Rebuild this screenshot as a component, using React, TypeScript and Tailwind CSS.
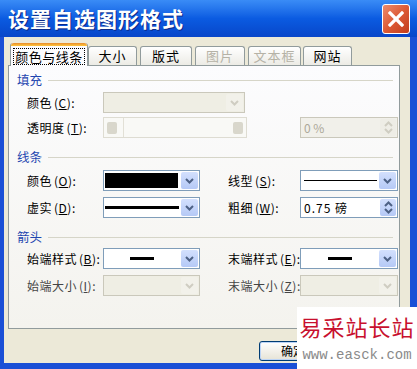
import React from "react";

const CJK = '"Noto Sans CJK SC", "Noto Sans", sans-serif';

function Chevron({ color = "#4d6185", down = true }: { color?: string; down?: boolean }) {
  return (
    <svg width="9" height="6" viewBox="0 0 9 6">
      <path d={down ? "M1 1 L4.5 4.5 L8 1" : "M1 5 L4.5 1.5 L8 5"} fill="none" stroke={color} strokeWidth="2" />
    </svg>
  );
}

function ArrowBtn({ disabled }: { disabled?: boolean }) {
  return (
    <div
      className={`ml-auto m-[1px] flex w-[17px] items-center justify-center rounded-[2px] ${
        disabled ? "bg-[#f2f1ea]" : "bg-gradient-to-b from-[#d3e0fd] to-[#b5c9f6]"
      }`}
    >
      <Chevron color={disabled ? "#cfcdc2" : "#4d6185"} />
    </div>
  );
}

function Combo({ className, disabled, children }: { className: string; disabled?: boolean; children?: React.ReactNode }) {
  return (
    <div
      className={`flex h-[21px] items-stretch border ${
        disabled ? "border-[#cac8bb] bg-[#efeee4]" : "border-[#7f9db9] bg-white"
      } ${className}`}
    >
      <div className="flex flex-1 items-center">{children}</div>
      <ArrowBtn disabled={disabled} />
    </div>
  );
}

function Spinner({ className, disabled, children }: { className: string; disabled?: boolean; children?: React.ReactNode }) {
  return (
    <div
      className={`flex h-[21px] items-stretch border ${
        disabled ? "border-[#cac8bb] bg-[#f1f0ea]" : "border-[#7f9db9] bg-white"
      } ${className}`}
    >
      <div className={`flex flex-1 items-center pl-[3px] text-[12px] ${disabled ? "text-[#aca899]" : "text-black"}`}>
        {children}
      </div>
      <div
        className={`m-[1px] flex w-[16px] flex-col items-center justify-center gap-[1px] rounded-[2px] ${
          disabled ? "bg-[#eeede6]" : "bg-gradient-to-b from-[#d3e0fd] to-[#b5c9f6]"
        }`}
      >
        <Chevron color={disabled ? "#cfcdc2" : "#4d6185"} down={false} />
        <Chevron color={disabled ? "#cfcdc2" : "#4d6185"} />
      </div>
    </div>
  );
}

function Label({ text, k, className = "", disabled }: { text: string; k: string; className?: string; disabled?: boolean }) {
  return (
    <div className={`flex items-center whitespace-nowrap text-[12px] tracking-[0.5px] ${disabled ? "text-[#444]" : "text-black"} ${className}`}>
      {text}
      <span className="ml-[2px]">
        (<span className="underline">{k}</span>):
      </span>
    </div>
  );
}

function Heading({ text, className = "" }: { text: string; className?: string }) {
  return (
    <div className={`flex h-[16px] items-center pl-[8px] pr-[6px] ${className}`}>
      <span className="text-[12.5px] text-[#1f47b0]">{text}</span>
      <div className="ml-[6px] h-[1px] flex-1 bg-[#d6d5c8]" />
    </div>
  );
}

const tabs = [
  { t: "颜色与线条", w: "w-[78px]", ml: "ml-[2px]", sel: true },
  { t: "大小", w: "w-[49px]", ml: "ml-0" },
  { t: "版式", w: "w-[52px]", ml: "ml-[3px]" },
  { t: "图片", w: "w-[50px]", ml: "ml-[3px]", dis: true },
  { t: "文本框", w: "w-[53px]", ml: "ml-[3px]", dis: true },
  { t: "网站", w: "w-[49px]", ml: "ml-[2px]" },
];

export default function App() {
  return (
    <div className="relative flex h-[369px] w-[417px] flex-col overflow-hidden bg-[#1a4fd6]" style={{ fontFamily: CJK }}>
      {/* Title bar */}
      <div className="flex h-[37px] items-center justify-between bg-gradient-to-b from-[#3a8cf6] via-[#0b5be1] to-[#0846c9] pl-[8px] pr-[7px]">
        <span className="text-[21px] font-bold tracking-[1px] text-white [text-shadow:1px_1px_0_#0b2a8a]">设置自选图形格式</span>
        <div className="flex h-[30px] w-[28px] items-center justify-center rounded-[3px] border border-white bg-gradient-to-br from-[#ec8a6c] via-[#dc5a35] to-[#c23c1c]">
          <svg width="16" height="16" viewBox="0 0 16 16">
            <path d="M2 2 L14 14 M14 2 L2 14" stroke="white" strokeWidth="3.2" strokeLinecap="square" />
          </svg>
        </div>
      </div>

      {/* Frame + body */}
      <div className="flex flex-1 pb-[6px] pl-[4px] pr-[7px]">
        <div className="flex flex-1 flex-col bg-[#ece9d8] pl-[4px] pr-[10px] pt-[6px]">
          {/* Tabs */}
          <div className="relative z-10 flex h-[22px] items-end">
            {tabs.map((tb) =>
              tb.sel ? (
                <div
                  key={tb.t}
                  className={`${tb.ml} ${tb.w} -mb-[1px] flex h-[23px] flex-col rounded-t-[3px] border-x border-[#919b9c] bg-[#fcfcfe]`}
                >
                  <div className="h-[3px] rounded-t-[3px] bg-gradient-to-b from-[#e68b2c] to-[#ffc73c]" />
                  <div className="flex flex-1 items-center justify-center">
                    <span className="border border-dotted border-black px-[1px] text-[13px] leading-[15px] tracking-[0.5px] text-black">
                      {tb.t}
                    </span>
                  </div>
                </div>
              ) : (
                <div
                  key={tb.t}
                  className={`${tb.ml} ${tb.w} flex h-[19px] items-center justify-center rounded-t-[3px] border-x border-t border-[#919b9c] bg-gradient-to-b from-white to-[#ecebe5] text-[13px] tracking-[1px] ${
                    tb.dis ? "text-[#b5b2a6]" : "text-black"
                  }`}
                >
                  {tb.t}
                </div>
              )
            )}
          </div>

          {/* Panel */}
          <div className="flex h-[264px] flex-col border border-[#919b9c] bg-gradient-to-b from-[#fcfcfe] to-[#f4f3ee]">
            <Heading text="填充" className="mt-[6px]" />
            {/* row 1 */}
            <div className="mt-[4px] flex h-[21px] items-center pl-[18px]">
              <Label text="颜色" k="C" className="w-[76px]" />
              <Combo className="w-[142px]" disabled />
            </div>
            {/* row 2 */}
            <div className="mt-[4px] flex h-[21px] items-center pl-[18px]">
              <Label text="透明度" k="T" className="w-[76px]" />
              <div className="relative flex h-[21px] w-[144px] items-center border border-[#dedcd2] bg-[#f9f9f6]">
                <div className="ml-[3px] h-[12px] w-[10px] rounded-[2px] bg-[#d9d7cc]" />
                <div className="ml-[6px] h-[19px] w-[1px] bg-[#e2e0d6]" />
                <div className="ml-auto mr-[3px] h-[12px] w-[10px] rounded-[2px] bg-[#d9d7cc]" />
              </div>
              <Spinner className="ml-[53px] w-[98px]" disabled>
                0 %
              </Spinner>
            </div>

            <Heading text="线条" className="mt-[11px]" />
            {/* row 3 */}
            <div className="mt-[5px] flex h-[21px] items-center pl-[18px]">
              <Label text="颜色" k="O" className="w-[76px]" />
              <Combo className="w-[97px]">
                <div className="ml-[1px] h-[15px] w-[73px] bg-black" />
              </Combo>
              <Label text="线型" k="S" className="ml-[28px] w-[72px]" />
              <Combo className="w-[98px]">
                <div className="ml-[3px] h-[1px] w-[73px] bg-black" />
              </Combo>
            </div>
            {/* row 4 */}
            <div className="mt-[6px] flex h-[21px] items-center pl-[18px]">
              <Label text="虚实" k="D" className="w-[76px]" />
              <Combo className="w-[97px]">
                <div className="ml-[1px] h-[3px] w-[74px] bg-black" />
              </Combo>
              <Label text="粗细" k="W" className="ml-[28px] w-[72px]" />
              <Spinner className="w-[98px]">
                <span className="tracking-[1px]">0.75 磅</span>
              </Spinner>
            </div>

            <Heading text="箭头" className="mt-[11px]" />
            {/* row 5 */}
            <div className="mt-[3px] flex h-[21px] items-center pl-[18px]">
              <Label text="始端样式" k="B" className="w-[76px]" />
              <Combo className="w-[97px]">
                <div className="ml-[26px] h-[3px] w-[24px] bg-black" />
              </Combo>
              <Label text="末端样式" k="E" className="ml-[28px] w-[72px]" />
              <Combo className="w-[98px]">
                <div className="ml-[27px] h-[3px] w-[24px] bg-black" />
              </Combo>
            </div>
            {/* row 6 */}
            <div className="mt-[6px] flex h-[21px] items-center pl-[18px]">
              <Label text="始端大小" k="I" className="w-[76px]" disabled />
              <Combo className="w-[97px]" disabled />
              <Label text="末端大小" k="Z" className="ml-[28px] w-[72px]" disabled />
              <Combo className="w-[98px]" disabled />
            </div>
          </div>

          {/* Buttons */}
          <div className="mt-[12px] flex pl-[251px]">
            <div className="flex h-[20px] w-[75px] items-center justify-start rounded-[3px] border border-[#003c74] bg-gradient-to-b from-white to-[#e6e3d6] pl-[21px] text-[12px] text-black shadow-[inset_0_0_0_1px_#bcd4f6]">
              确定
            </div>
          </div>
        </div>
      </div>

      {/* Watermark overlay */}
      <div className="absolute left-[297px] top-[307px] flex h-[62px] w-[120px] flex-col items-center bg-white pt-[6px]">
        <span className="text-[22px] leading-[26px] tracking-[1px] text-[#c8102e]">易采站长站</span>
        <span className="mt-[8px] text-[14px] leading-[16px] text-[#8a8a8a]" style={{ fontFamily: '"Liberation Mono", monospace' }}>
          www.easck.com
        </span>
      </div>
    </div>
  );
}
